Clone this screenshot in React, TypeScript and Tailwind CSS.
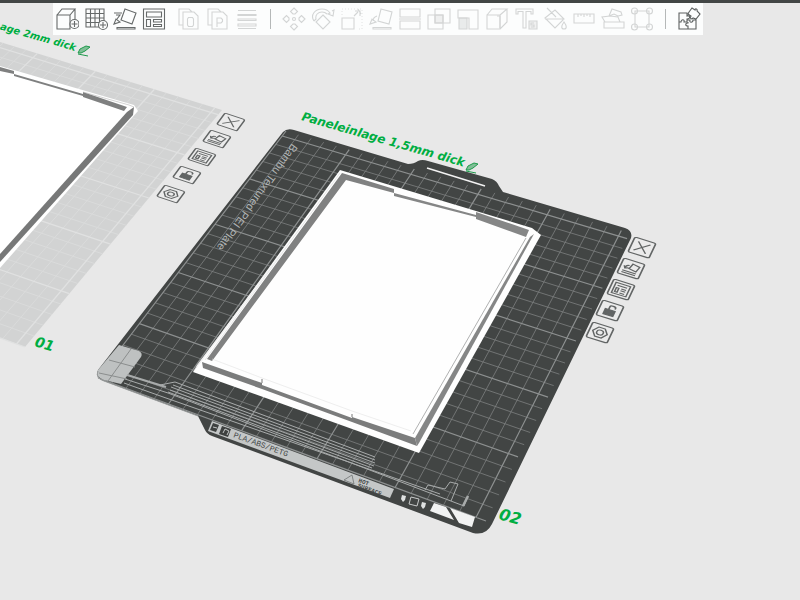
import type { ReactNode } from 'react';

type Point = [number, number];
type Quad = [Point, Point, Point, Point];

type ToolIcon = {
  label: string;
  art: ReactNode;
};

const PLATE_SIZE = 256;

// corners: top left, top right, bottom right, bottom left
function project(quad: Quad, u: number, v: number): Point {
  const [[x0, y0], [x1, y1], [x2, y2], [x3, y3]] = quad;
  const dx1 = x1 - x2;
  const dx2 = x3 - x2;
  const dx3 = x0 - x1 + x2 - x3;
  const dy1 = y1 - y2;
  const dy2 = y3 - y2;
  const dy3 = y0 - y1 + y2 - y3;
  const det = dx1 * dy2 - dx2 * dy1;
  const g = (dx3 * dy2 - dx2 * dy3) / det;
  const h = (dx1 * dy3 - dx3 * dy1) / det;
  const w = g * u + h * v + 1;
  return [
    ((x1 - x0 + g * x1) * u + (x3 - x0 + h * x3) * v + x0) / w,
    ((y1 - y0 + g * y1) * u + (y3 - y0 + h * y3) * v + y0) / w,
  ];
}

function segment(a: Point, b: Point) {
  return `M${a[0].toFixed(1)} ${a[1].toFixed(1)}L${b[0].toFixed(1)} ${b[1].toFixed(1)}`;
}

function gridPath(quad: Quad, bold: boolean) {
  const parts: string[] = [];
  for (let mm = 0; mm <= 250; mm += 10) {
    if ((mm % 50 === 0) !== bold) continue;
    const u = mm / PLATE_SIZE;
    const v = 1 - mm / PLATE_SIZE;
    parts.push(segment(project(quad, u, 0), project(quad, u, 1)));
    parts.push(segment(project(quad, 0, v), project(quad, 1, v)));
  }
  return parts.join('');
}

const plateOne: Quad = [[-75, 19], [222, 110], [25, 347], [-315, 225]];
const plateTwo: Quad = [[286, 131], [630, 233], [486, 521], [98, 378]];

const editTools: ToolIcon[] = [
  {
    label: 'Add',
    art: <><path d="M2 8h13v14H2zM2 8l5-6h13l-5 6M20 2v10" /><circle cx="19.5" cy="17" r="4.5" fill="#fcfdfd" /><path d="M19.5 14v6M16.5 17h6" /></>,
  },
  {
    label: 'Add plate',
    art: <><path d="M2 2h18v18H2zM6.500 2v18M11 2v18M15.500 2v18M2 6.500h18M2 11h18M2 15.500h18" /><circle cx="19" cy="18" r="4.5" fill="#fcfdfd" /><path d="M19 15v6M16 18h6" /></>,
  },
  {
    label: 'Auto orient',
    art: <path d="M12 2l11 4-4 11-11-4zM1 6h8M3 8h4l-3 4M1 17l2-5 4 3zM4 20.500h18v1.500H4z" />,
  },
  {
    label: 'Arrange',
    art: <path d="M1.500 2h21v20h-21zM4.500 5h15v5h-15zM4.500 12.500h4v7h-4zM11.500 12.500h8v2.500h-8zM11.500 17.500h8v2h-8z" />,
  },
];

const listTools: ToolIcon[] = [
  {
    label: 'Split to objects',
    art: <path d="M6 18H2V2h10l3 3M6 5h11l4 4v13H6zM11.500 10.500h4l1 1.500v6l-1 1.500h-4l-1-1.500v-6z" />,
  },
  {
    label: 'Split to parts',
    art: <path d="M6 18H2V2h10l3 3M6 5h11l4 4v13H6zM11 20v-9h4l1.500 1.500v2L15 16h-4" />,
  },
  {
    label: 'Variable layer height',
    art: <path d="M3 3.500h18M3 7.500h18v1H3zM3 12h18v1.500H3zM3 17h18v2H3zM3 21.500h18" />,
  },
];

const modelTools: ToolIcon[] = [
  {
    label: 'Move',
    art: <><path d="M12 1l3.500 3.500L13 7h-2L8.500 4.500zM12 23l3.500-3.500L13 17h-2l-2.500 2.500zM1 12l3.500-3.500L7 11v2l-2.500 2.500zM23 12l-3.500-3.500L17 11v2l2.500 2.500z" /><circle cx="12" cy="12" r="1.5" /></>,
  },
  {
    label: 'Rotate',
    art: <path d="M12 8l7 7-7 7-7-7zM3 14C-1 8 4 2 11 2c3 0 6 1 8 4l-2 1 5 2 1-6-2 1M3 14l2-2c-1-4 2-7 6-7 2 0 4 1 5 2" />,
  },
  {
    label: 'Scale',
    art: <><path d="M2 11h12v11H2zM14 9l4-4M15 4h5v5M18 2l3 5" /><path strokeDasharray="1 2" d="M2 8V2h20v20h-5" opacity=".6" /></>,
  },
  {
    label: 'Lay on face',
    art: <path d="M12 2l11 3-3 12-11-3zM8 9c-3 1-4 3-4 5M1 17l2-5 4 3zM4 20.500h18v1.500H4z" />,
  },
  {
    label: 'Cut',
    art: <path d="M2 2h20v8H2zM2 14h20v8H2zM1 12h22" />,
  },
  {
    label: 'Mesh boolean',
    art: <><path d="M8 2h15v14H8zM1 8h15v14H1z" /><path d="M8 8h8v8H8z" fill="currentColor" fillOpacity=".35" /></>,
  },
  {
    label: 'Support painting',
    art: <><path d="M2 3h20v19h-9V11H2z" /><path d="M3 11h8v11H3z" fill="currentColor" fillOpacity=".45" /></>,
  },
  {
    label: 'Seam painting',
    art: <><path d="M2 8h13v14H2zM2 8l5-6h15l-7 6M22 2v13l-7 7" /><path d="M12 9h3v12" /></>,
  },
  {
    label: 'Text shape',
    art: <><path d="M2 2h17v5h-2V4.500h-5V21H9V4.500H4V7H2z" /><path d="M15 14h8v8h-8z" fill="currentColor" fillOpacity=".3" /><path d="M20 16h-3v2h3v2h-3" /></>,
  },
  {
    label: 'Color painting',
    art: <path d="M2 11L12 3l9 9-9 9zM2 12h18M4 1l9 9M21 15c-3 4-3 7 0 7s3-3 0-7z" />,
  },
  {
    label: 'Measure',
    art: <path d="M2 7h20v9H2zM6 7v3M9 7v2M12 7v3M15 7v2M18 7v3" />,
  },
  {
    label: 'Assembly tool',
    art: <path d="M3 15h20v6H3zM1 10l3 5h15l-2-5-8-1zM8 9l3-7 9 3 1 3-4 1-4-2-5 2" />,
  },
  {
    label: 'Brim ears',
    art: <><path d="M5 4h14v16H5z" /><circle cx="4.5" cy="4" r="3" /><circle cx="19.5" cy="4" r="3" /><circle cx="4.5" cy="20" r="3" /><circle cx="19.5" cy="20" r="3" /></>,
  },
];

const assemblyArt = (
  <path d="M2 6h8v3c3-1 4 3 0 3v3H7c1-3-3-3-3 0H2zM2 15v7h9v-3c-3 0-3-3 0-3v-1M11 22h8v-9h-3c0 3-4 3-3 0h-3M12 5l3-4 3 2c0-2 3-1 2 1l3 3-4 5-3-1c-1 2-4 0-2-2l-3-2z" />
);

const plateIcons: ToolIcon[] = [
  { label: 'Remove plate', art: <path d="M5 4l14 16M20 4L4 20" /> },
  { label: 'Orient plate', art: <path d="M12 4l9 2-2 9-9-2zM9 8c-3 0-4 2-4 5M3 10l2 4 4-2M3 18h17M3 21h17" /> },
  { label: 'Arrange plate', art: <path d="M3 3h18v18H3zM6 7h12M6 11h3v7H6zM12 11h6M12 14h6M12 18h6" /> },
  { label: 'Lock plate', art: <><path d="M6 11h12v9H6z" fill="currentColor" /><path d="M10 11V6c0-3 7-3 7 0v2" strokeWidth="2" /></> },
  { label: 'Plate settings', art: <><path d="M8 4h8l5 8-5 8H8l-5-8z" /><circle cx="12" cy="12" r="4" /></> },
];

const plateOneSpots = [
  'left-[216px] top-[112px]',
  'left-[202px] top-[129px]',
  'left-[187px] top-[147px]',
  'left-[172px] top-[165px]',
  'left-[156px] top-[184px]',
];

const plateTwoSpots = [
  'left-[627px] top-[237px]',
  'left-[616px] top-[258px]',
  'left-[606px] top-[279px]',
  'left-[595px] top-[300px]',
  'left-[585px] top-[322px]',
];

function ToolGroup({ tools, muted = false }: { tools: ToolIcon[]; muted?: boolean }) {
  return (
    <div className={muted ? 'flex gap-[5px] text-[#d3d5d5]' : 'flex gap-[5px] text-[#666a6a]'}>
      {tools.map((tool) => (
        <button key={tool.label} type="button" aria-label={tool.label} className="size-6">
          <svg viewBox="0 0 24 24" className="size-6" fill="none" stroke="currentColor" strokeWidth="1.1">
            {tool.art}
          </svg>
        </button>
      ))}
    </div>
  );
}

function PlateButtons({ spots, matrix }: { spots: string[]; matrix: string }) {
  return (
    <>
      {plateIcons.map((icon, index) => (
        <button key={icon.label} type="button" aria-label={icon.label} className={`absolute h-[22px] w-[30px] text-[#626565] ${spots[index]}`}>
          <svg viewBox="0 0 30 22" className="h-[22px] w-[30px]" fill="none" stroke="currentColor" strokeWidth="1.8">
            <g transform={matrix}>
              <rect x="0" y="0" width="24" height="24" rx="2" fill="#ebebeb" />
              <g transform="translate(1 1) scale(.92)">{icon.art}</g>
            </g>
          </svg>
        </button>
      ))}
    </>
  );
}

function PencilIcon({ x, y }: { x: number; y: number }) {
  return (
    <g transform={`translate(${x} ${y})`} fill="none" stroke="#1f9a4c" strokeWidth="1">
      <path d="M1 7l2-4 6-3 4 1-5 4-4 2z" fill="#7fbf96" />
      <path d="M1 8l10 2" />
    </g>
  );
}

function PlateOne() {
  return (
    <g>
      <path d="M-75 19L222 110L25 347L-315 225Z" fill="#d2d3d3" />
      <path d={gridPath(plateOne, false)} stroke="#dadbdb" strokeWidth="1" />
      <path d={gridPath(plateOne, true)} stroke="#e0e1e1" strokeWidth="1.3" />
      <path d="M0 66L134 105L138 111L0 268Z" fill="#fff" />
      <path d="M0 67L14 71V74L0 71ZM14 74L83 94V96L14 76ZM83 92L127 107L124 111L83 97Z" fill="#7f8080" />
      <path d="M134 107L133 115L0 262V254L127 112Z" fill="#777878" />
      <path d="M83 92L129 105L134 107" fill="none" stroke="#b5b5b5" strokeWidth=".6" />
    </g>
  );
}

function PlateTwo() {
  return (
    <g>
      <path
        d="M283 132Q287 128 294 130L408 164Q414 164 418 161Q422 159 428 161L492 179Q497 181 499 186L503 192L625 228Q633 231 631 238L492 524Q486 536 473 533L212 436Q207 434 205 430L198 416L104 381Q95 378 98 370Z"
        fill="#424544"
      />
      <path d={gridPath(plateTwo, false)} stroke="#7d8080" strokeWidth=".8" />
      <path d={gridPath(plateTwo, true)} stroke="#8d9090" strokeWidth="1.2" />
      <path d="M427 168L485 186" stroke="#f2f2f2" strokeWidth="1.5" />

      <path d="M119 345L139 351Q143 353 141 357L121 384L104 380Q95 377 98 370Z" fill="#bec1c1" />
      <path d="M131 349L108 381M109 360L135 367M99 373L127 379" stroke="#8b8e8e" strokeWidth="1" />
      <path d="M98 371Q95 378 104 381L198 416" fill="none" stroke="#9a9d9d" strokeWidth="1" />

      <g stroke="#a8abab" strokeWidth="1" fill="none">
        <path d="M127 375L166 387" strokeWidth="2" />
        <path d="M175 382L375 457M173 385L375 460M171 387L375 463M170 390L374 466M168 392L372 468" />
        <path d="M125 379L168 393L464 506L468 496M124 383L166 398L440 494M160 385L175 382" />
        <path d="M425 490L428 485L445 489L450 482L458 484L451 501" />
        <path d="M463 506L468 496" strokeWidth="2.5" />
      </g>

      <path d="M212 421L394 489L390 498L208 431Z" fill="#c4c7c7" />
      <path d="M213 423l6 2-3 7-6-2zM222 426l9 3-3 8-9-3z" fill="#3e4140" />
      <path d="M213 427l4 1M223 433l2-4 4 2-2 4" stroke="#c4c7c7" fill="none" />
      <text transform="translate(233 437) rotate(20)" fontSize="8" className="fill-[#454848] font-['Liberation_Mono']">PLA/ABS/PETG</text>
      <path d="M344 480L352 475L354 484Z" fill="none" stroke="#707373" strokeWidth=".8" />
      <text transform="translate(358 482) rotate(20)" fontSize="6" className="fill-[#454848] font-['Liberation_Mono'] font-bold">
        <tspan x="0" y="0">HOT</tspan>
        <tspan x="1" y="5">SURFACE</tspan>
      </text>
      <path d="M402 495l4 1-1 4-2 2-2-3zM422 502l4 1-1 4-2 2-2-3z" fill="#dfe1e1" />
      <path d="M411 497l8 2-2 7-8-2z" fill="none" stroke="#c8caca" />
      <path d="M434 503L446 507L454 520L430 511ZM450 508L475 517L472 527L459 523Z" fill="#f1f2f2" />

      <text transform="translate(292 143) rotate(126)" fontSize="11" className="fill-[#b4b7b7] font-['Liberation_Sans']">Bambu Textured PEI Plate</text>

      <path d="M340 170L532 228L541 235L419 453L193 372Z" fill="#fefefe" />
      <path d="M335 181L202 361L193 372L197 365Z" fill="#f0f0f0" />
      <path d="M342 173L394 189V193L346 180L212 361L207 359Z" fill="#808181" />
      <path d="M394 193L476 215V217L394 196ZM476 212L529 230L526 237L476 219Z" fill="#858686" />
      <path d="M202 362L262 383V389L203 368ZM262 385L352 418V422L262 389ZM352 417L415 438L417 446L352 422Z" fill="#7b7c7c" />
      <path d="M534 234L419 443L417 446L415 438L530 237Z" fill="#858686" />
      <path d="M526 238L413 434" stroke="#b0b1b1" strokeWidth="1" />
      <path d="M340 173L205 360" stroke="#d9dada" strokeWidth=".6" />
      <path d="M262 379V383M352 414V417" stroke="#777" strokeWidth="1" />
      <path d="M212 359L262 378L352 411L411 431" fill="none" stroke="#e2e2e2" strokeWidth=".6" />
    </g>
  );
}

export default function App() {
  return (
    <div className="relative min-h-screen overflow-hidden bg-[#e8e8e8] font-['DejaVu_Sans',sans-serif]">
      <svg viewBox="0 0 800 600" className="absolute left-0 top-0 h-[600px] w-[800px]" role="img" aria-label="Build plates">
        <PlateOne />
        <PlateTwo />
        <g className="fill-[#00ae42] font-['DejaVu_Sans'] font-bold italic">
          <text transform="translate(75 51) rotate(16)" fontSize="10" textAnchor="end">age 2mm dick</text>
          <text transform="translate(301 120) rotate(16)" fontSize="12">Paneleinlage 1,5mm dick</text>
          <text transform="translate(34 346) rotate(16)" fontSize="14">01</text>
          <text transform="translate(498 519) rotate(16)" fontSize="16">02</text>
        </g>
        <PencilIcon x={77} y={46} />
        <PencilIcon x={465} y={163} />
      </svg>

      <PlateButtons spots={plateOneSpots} matrix="matrix(.83 .28 -.34 .47 9 1)" />
      <PlateButtons spots={plateTwoSpots} matrix="matrix(.87 .27 -.29 .61 8 0)" />

      <div className="relative h-[3px] bg-[#424645]" />
      <div className="relative ml-[53px] flex h-8 w-fit items-center gap-[11px] bg-[#fcfdfd] px-0.5">
        <ToolGroup tools={editTools} />
        <ToolGroup tools={listTools} muted />
        <span className="h-5 w-px bg-[#b5b8b8]" />
        <ToolGroup tools={modelTools} muted />
        <span className="h-5 w-px bg-[#b5b8b8]" />
        <button type="button" aria-label="Assembly view" className="size-6 text-[#5c6060]">
          <svg viewBox="0 0 24 24" className="size-6" fill="none" stroke="currentColor" strokeWidth="1.1">
            {assemblyArt}
          </svg>
        </button>
      </div>
    </div>
  );
}
